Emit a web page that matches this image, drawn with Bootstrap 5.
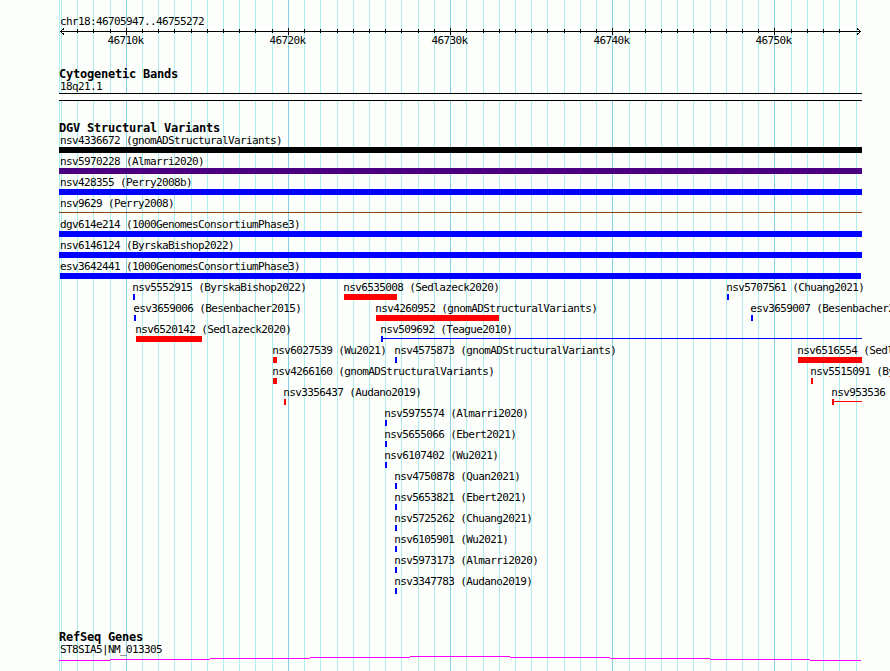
<!DOCTYPE html>
<html lang="en">
<head>
    <meta charset="UTF-8">
    <meta name="viewport" content="width=device-width, initial-scale=1.0">
    <title>Genome Browser</title>
    <link href="https://cdn.jsdelivr.net/npm/bootstrap@5.3.0/dist/css/bootstrap.min.css" rel="stylesheet">
    <style>
        body {
            background-color: #fdfffc;
            color: #000;
            font-family: "DejaVu Sans Mono", monospace;
            font-size: 11px;
            line-height: 12px;
            letter-spacing: -0.622px;
        }
        .browser-panel {
            height: 671px;
        }
        .grid-lines {
            z-index: -1;
        }
        .axis-area {
            height: 54px;
            padding-top: 16px;
        }
        .axis-svg {
            height: 30px;
            margin-top: -4px;
        }
        .range-label, .track-label {
            padding-left: 60px;
        }
        .track-title {
            padding-left: 59px;
            font-size: 12px;
            font-weight: bold;
            line-height: 13px;
            letter-spacing: -0.224px;
        }
        .cyto-track {
            height: 54px;
            padding-top: 14px;
        }
        .cyto-band {
            height: 8px;
            width: 803px;
            margin: 0 0 0 59px;
            border: solid #000;
            border-width: 1px 0;
            background-color: #fdfffc;
        }
        .variant-track {
            height: 509px;
            padding-top: 14px;
        }
        .gene-track {
            padding-top: 14px;
        }
        .track-row {
            height: 21px;
        }
        .feature-label, .feature-bar, .feature-line {
            position: absolute;
            white-space: pre;
        }
        .feature-label {
            top: 0;
        }
        .feature-bar {
            top: 12px;
            height: 6px;
        }
        .feature-line {
            top: 14px;
            height: 1px;
        }
    </style>
</head>
<body class="overflow-hidden">
    <main class="browser-panel position-relative overflow-hidden">
        <svg class="grid-lines position-absolute top-0 start-0 w-100 h-100" id="grid" shape-rendering="crispEdges"></svg>

        <section class="axis-area">
            <div class="range-label">chr18:46705947..46755272</div>
            <svg class="axis-svg d-block w-100" id="axis" shape-rendering="crispEdges"></svg>
        </section>

        <section class="cyto-track">
            <div class="track-title">Cytogenetic Bands</div>
            <div class="track-label">18q21.1</div>
            <div class="cyto-band"></div>
        </section>

        <section class="variant-track">
            <div class="track-title">DGV Structural Variants</div>
            <div id="variants"></div>
        </section>

        <section class="gene-track">
            <div class="track-title">RefSeq Genes</div>
            <div class="track-label">ST8SIA5|NM_013305</div>
            <svg class="d-block w-100" height="10" id="gene" shape-rendering="crispEdges"></svg>
        </section>
    </main>

    <script src="https://cdn.jsdelivr.net/npm/bootstrap@5.3.0/dist/js/bootstrap.bundle.min.js"></script>
    <script>
        const black = "#000", purple = "#4b0082", blue = "#00f", red = "#f00", brown = "#8b4513";

        // one array per row; each feature is [label, start, end, color, line end]
        const rows = [
            [["nsv4336672 (gnomADStructuralVariants)", 59, 862, black]],
            [["nsv5970228 (Almarri2020)", 59, 862, purple]],
            [["nsv428355 (Perry2008b)", 59, 862, blue]],
            [["nsv9629 (Perry2008)", 59, 59, brown, 862]],
            [["dgv614e214 (1000GenomesConsortiumPhase3)", 59, 862, blue]],
            [["nsv6146124 (ByrskaBishop2022)", 59, 862, blue]],
            [["esv3642441 (1000GenomesConsortiumPhase3)", 60, 861, blue]],
            [
                ["nsv5552915 (ByrskaBishop2022)", 133, 135, blue],
                ["nsv6535008 (Sedlazeck2020)", 344, 397, red],
                ["nsv5707561 (Chuang2021)", 727, 729, blue]
            ],
            [
                ["esv3659006 (Besenbacher2015)", 134, 136, blue],
                ["nsv4260952 (gnomADStructuralVariants)", 376, 499, red],
                ["esv3659007 (Besenbacher2015)", 751, 753, blue]
            ],
            [
                ["nsv6520142 (Sedlazeck2020)", 136, 202, red],
                ["nsv509692 (Teague2010)", 381, 383, blue, 862]
            ],
            [
                ["nsv6027539 (Wu2021)", 273, 277, red],
                ["nsv4575873 (gnomADStructuralVariants)", 395, 397, blue],
                ["nsv6516554 (Sedlazeck2020)", 798, 862, red]
            ],
            [
                ["nsv4266160 (gnomADStructuralVariants)", 273, 277, red],
                ["nsv5515091 (ByrskaBishop2022)", 811, 813, red]
            ],
            [
                ["nsv3356437 (Audano2019)", 284, 286, red],
                ["nsv953536", 832, 834, red, 862]
            ],
            [["nsv5975574 (Almarri2020)", 385, 387, blue]],
            [["nsv5655066 (Ebert2021)", 385, 387, blue]],
            [["nsv6107402 (Wu2021)", 385, 387, blue]],
            [["nsv4750878 (Quan2021)", 395, 397, blue]],
            [["nsv5653821 (Ebert2021)", 395, 397, blue]],
            [["nsv5725262 (Chuang2021)", 395, 397, blue]],
            [["nsv6105901 (Wu2021)", 395, 397, blue]],
            [["nsv5973173 (Almarri2020)", 395, 397, blue]],
            [["nsv3347783 (Audano2019)", 395, 397, blue]]
        ];

        const rect = (x, y, w, h, fill) =>
            '<rect x="' + x + '" y="' + y + '" width="' + w + '" height="' + h + '" fill="' + fill + '"/>';

        // one grid line per kilobase, a darker one every ten
        let gridSVG = rect(59, 0, 1, 671, "#afeeee");
        let axisSVG = rect(60, 7, 801, 1, black);
        for (let kb = 46706; kb <= 46755; kb++) {
            const x = Math.round(60.85 + (kb - 46706) * 16.219);
            const major = kb % 10 === 0;
            gridSVG += rect(x, 0, 1, 671, major ? "#87ceeb" : "#afeeee");
            if (kb > 46706 && kb < 46755) {
                axisSVG += major ? rect(x, 4, 1, 7, black) : rect(x, 5, 1, 4, black);
            }
            if (major) {
                axisSVG += '<text x="' + (x - 18.5) + '" y="20">' + kb + 'k</text>';
            }
        }
        axisSVG += '<path d="M64 4.5l-3.5 3 3.5 3M857 4.5l3.5 3-3.5 3" fill="none" stroke="#000"/>';
        document.getElementById("grid").innerHTML = gridSVG;
        document.getElementById("axis").innerHTML = axisSVG;

        let rowsHTML = "";
        rows.forEach(function(row) {
            rowsHTML += '<div class="track-row position-relative">';
            row.forEach(function(f) {
                const labelX = Math.max(f[1] - 0.8, 60);
                rowsHTML += '<span class="feature-label" style="left:' + labelX + 'px">' + f[0] + '</span>';
                if (f[4]) {
                    rowsHTML += '<span class="feature-line" style="left:' + f[1] + 'px;width:' + (f[4] - f[1]) + 'px;background:' + f[3] + '"></span>';
                }
                rowsHTML += '<span class="feature-bar" style="left:' + f[1] + 'px;width:' + (f[2] - f[1]) + 'px;background:' + f[3] + '"></span>';
            });
            rowsHTML += '</div>';
        });
        document.getElementById("variants").innerHTML = rowsHTML;

        // [start, end, offset] of each step of the transcript line
        const steps = [
            [59, 110, 4], [110, 210, 3], [210, 310, 2], [310, 410, 1], [410, 510, 0],
            [510, 610, 1], [610, 710, 2], [710, 810, 3], [810, 861, 4]
        ];
        document.getElementById("gene").innerHTML = steps.map(function(s) {
            return rect(s[0], s[2], s[1] - s[0], 1, "#f0f");
        }).join("");
    </script>
</body>
</html>
